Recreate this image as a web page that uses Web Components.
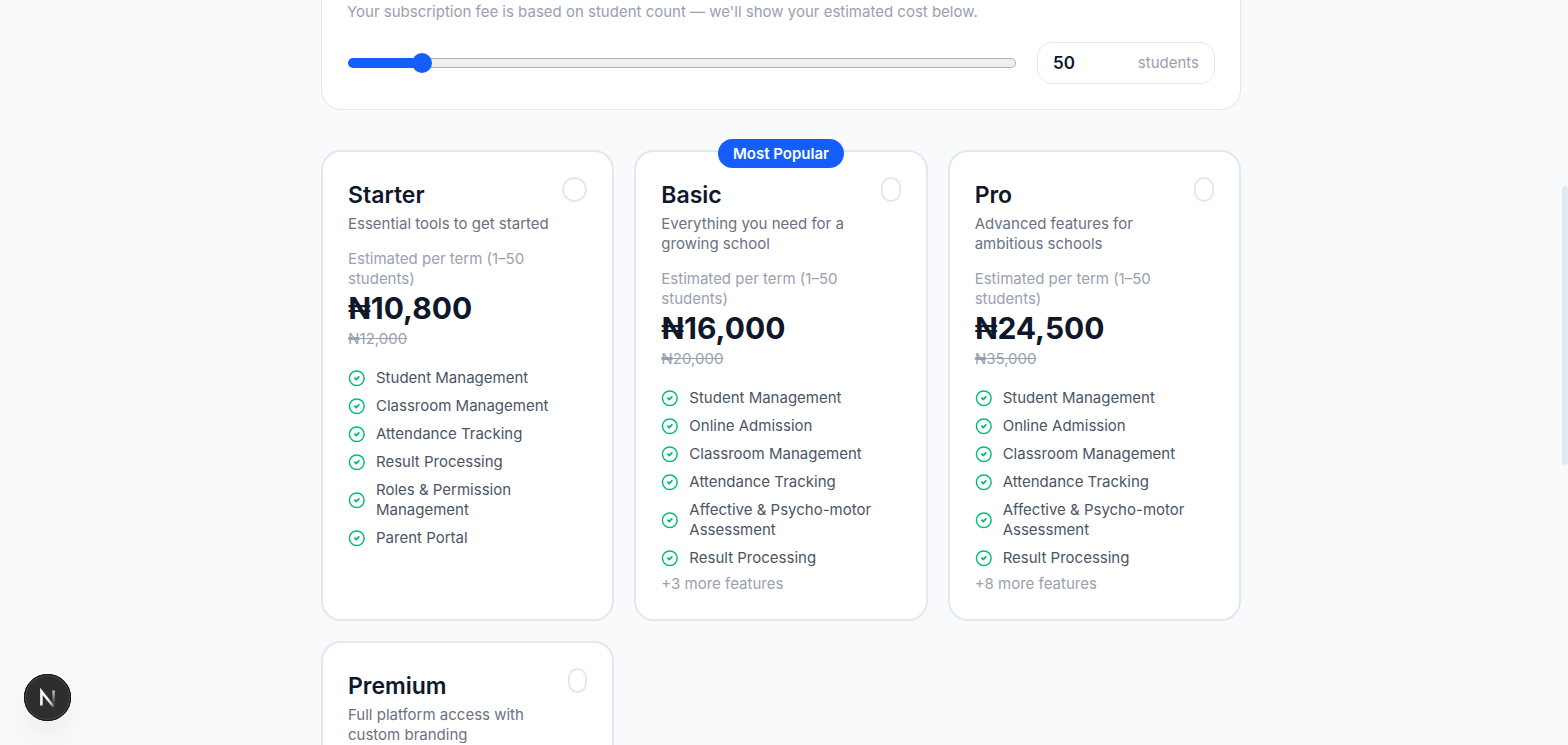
<!DOCTYPE html>
<html lang="en">
<head>
<meta charset="utf-8">
<meta name="viewport" content="width=device-width, initial-scale=1">
<title>Choose a plan</title>
<style>
  :root {
    --page: #f8fafc;
    --line: #e2e8f0;
    --brand: #155dfc;
    --ink: #0f172b;
    --body: #4a5565;
    --soft: #6a7282;
    --muted: #99a1af;
    --ok: #00bc7d;
  }
  body {
    margin: 0;
    background: var(--page);
    color: var(--ink);
    font: 15px/20px Inter, "Liberation Sans", sans-serif;
  }
</style>
</head>
<body>

<plan-page>
  <student-count value="50" min="1" max="500">
    Your subscription fee is based on student count — we'll show your estimated cost below.
  </student-count>

  <plan-grid>
    <plan-card name="Starter" price="₦10,800" was="₦12,000">
      Essential tools to get started
      <plan-feature slot="features">Student Management</plan-feature>
      <plan-feature slot="features">Classroom Management</plan-feature>
      <plan-feature slot="features">Attendance Tracking</plan-feature>
      <plan-feature slot="features">Result Processing</plan-feature>
      <plan-feature slot="features">Roles &amp; Permission Management</plan-feature>
      <plan-feature slot="features">Parent Portal</plan-feature>
    </plan-card>
    <plan-card name="Basic" price="₦16,000" was="₦20,000" more="3" badge="Most Popular">
      Everything you need for a growing school
      <plan-feature slot="features">Student Management</plan-feature>
      <plan-feature slot="features">Online Admission</plan-feature>
      <plan-feature slot="features">Classroom Management</plan-feature>
      <plan-feature slot="features">Attendance Tracking</plan-feature>
      <plan-feature slot="features">Affective &amp; Psycho-motor Assessment</plan-feature>
      <plan-feature slot="features">Result Processing</plan-feature>
    </plan-card>
    <plan-card name="Pro" price="₦24,500" was="₦35,000" more="8">
      Advanced features for ambitious schools
      <plan-feature slot="features">Student Management</plan-feature>
      <plan-feature slot="features">Online Admission</plan-feature>
      <plan-feature slot="features">Classroom Management</plan-feature>
      <plan-feature slot="features">Attendance Tracking</plan-feature>
      <plan-feature slot="features">Affective &amp; Psycho-motor Assessment</plan-feature>
      <plan-feature slot="features">Result Processing</plan-feature>
    </plan-card>
    <plan-card name="Premium">
      Full platform access with custom branding
    </plan-card>
  </plan-grid>
</plan-page>
<dev-badge></dev-badge>

<script>
/* ── <plan-page>: scrolling column with a slim rail on the right ── */
class PlanPage extends HTMLElement {
  constructor() {
    super();
    this.attachShadow({ mode: "open" }).innerHTML = `
      <style>
        :host {
          display: grid;
          grid-template-columns: 1fr 6px;
          height: 100vh;
        }
        main {
          overflow-y: auto;
          scrollbar-width: none;
        }
        .column {
          display: flex;
          flex-direction: column;
          gap: 40px;
          max-width: 920px;
          margin: 0 auto;
          padding-bottom: 40px;
        }
        .rail {
          display: grid;
          grid-template-rows: 186fr 279fr 280fr;
          background: #faf9f9;
        }
        .thumb {
          grid-row: 2;
          border-radius: 3px;
          background: var(--line);
        }
      </style>
      <main><div class="column"><slot></slot></div></main>
      <div class="rail"><div class="thumb"></div></div>
    `;
  }
}

/* ── <student-count>: range slider and number box kept in sync ── */
class StudentCount extends HTMLElement {
  connectedCallback() {
    const value = this.getAttribute("value");
    const min = this.getAttribute("min");
    const max = this.getAttribute("max");
    const root = this.attachShadow({ mode: "open" });
    root.innerHTML = `
      <style>
        :host {
          display: block;
          padding: 2px 25px 25px;
          border: 1px solid var(--line);
          border-top: 0;
          border-radius: 0 0 20px 20px;
          background: #fff;
        }
        p { margin: 0 0 20px; color: var(--muted); }
        .row { display: flex; align-items: center; gap: 20px; }
        input { font: inherit; color: inherit; }

        .range {
          --fill: 10%;
          appearance: none;
          flex: 1;
          min-width: 0;
          height: 20px;
          margin: 0 1px;
          background: none;
        }
        .range::-webkit-slider-runnable-track {
          box-sizing: border-box;
          height: 10px;
          border: 1px solid transparent;
          border-radius: 5px;
          background:
            linear-gradient(var(--brand), var(--brand)) 0 0 / var(--fill) 100% no-repeat border-box,
            linear-gradient(#efefef, #efefef) padding-box,
            linear-gradient(#b2b2b2, #b2b2b2) border-box;
        }
        .range::-webkit-slider-thumb {
          appearance: none;
          width: 20px;
          height: 20px;
          margin-top: -6px;
          border-radius: 50%;
          background: var(--brand);
        }

        .box {
          display: flex;
          align-items: center;
          justify-content: space-between;
          box-sizing: border-box;
          width: 178px;
          height: 42px;
          padding: 0 15px;
          border: 1px solid #e5e7eb;
          border-radius: 15px;
        }
        .number {
          appearance: textfield;
          width: 70px;
          padding: 0;
          border: 0;
          outline: 0;
          background: none;
          font-size: 17px;
          font-weight: 600;
        }
        .number::-webkit-inner-spin-button { appearance: none; margin: 0; }
        label { color: var(--muted); }
      </style>
      <p><slot></slot></p>
      <div class="row">
        <input class="range" type="range" aria-label="Student count" min="${min}" max="${max}" value="${value}">
        <div class="box">
          <input class="number" id="count" type="number" min="${min}" max="${max}" value="${value}">
          <label for="count">students</label>
        </div>
      </div>
    `;
    this._range = root.querySelector(".range");
    this._number = root.querySelector(".number");
    this._range.addEventListener("input", () => this._sync(this._range.value));
    this._number.addEventListener("input", () => this._sync(this._number.value));
    this._sync(value);
  }

  _sync(value) {
    const { min, max } = this._range;
    this._range.value = value;
    this._number.value = value;
    const k = (this._range.value - min) / (max - min);
    this._range.style.setProperty("--fill", `calc(10px + (100% - 20px) * ${k})`);
  }
}

/* ── <plan-grid>: equal rows of cards, one plan selected at a time ── */
class PlanGrid extends HTMLElement {
  constructor() {
    super();
    this.attachShadow({ mode: "open" }).innerHTML = `
      <style>
        :host {
          display: grid;
          grid-template-columns: repeat(3, 1fr);
          grid-auto-rows: 1fr;
          gap: 20px;
        }
        @media (max-width: 800px) {
          :host { grid-template-columns: 1fr; }
        }
      </style>
      <slot></slot>
    `;
    this.addEventListener("plan-select", (e) => {
      for (const card of this.querySelectorAll("plan-card")) {
        card.selected = card === e.target;
      }
    });
  }
}

/* ── <plan-card> ── */
class PlanCard extends HTMLElement {
  connectedCallback() {
    const name = this.getAttribute("name");
    const price = this.getAttribute("price");
    const was = this.getAttribute("was");
    const more = this.getAttribute("more");
    const badge = this.getAttribute("badge");
    const root = this.attachShadow({ mode: "open" });
    root.innerHTML = `
      <style>
        :host {
          position: relative;
          display: block;
          padding: 25px;
          border: 2px solid var(--line);
          border-radius: 20px;
          background: #fff;
        }
        :host([selected]) { border-color: var(--brand); }
        .badge {
          position: absolute;
          top: -13px;
          left: 50%;
          transform: translateX(-50%);
          padding: 5px 15px 4px;
          border-radius: 15px;
          background: var(--brand);
          color: #fff;
          font-weight: 600;
          white-space: nowrap;
        }
        header {
          display: flex;
          align-items: flex-start;
          justify-content: space-between;
          margin-bottom: 15px;
        }
        h3 { margin: 0; font-size: 23px; line-height: 37px; font-weight: 600; }
        p { margin: 0; }
        .about { color: var(--soft); }
        .muted { color: var(--muted); }
        .price { margin-bottom: 2px; font-size: 30px; line-height: 38px; font-weight: 700; }
        input {
          appearance: none;
          box-sizing: border-box;
          width: 25px;
          min-width: 0;
          height: 25px;
          margin: 0;
          border: 2px solid #e5e7eb;
          border-radius: 15px;
        }
        input:checked { border-color: var(--brand); background: var(--brand); }
        .features {
          display: flex;
          flex-direction: column;
          gap: 8px;
          margin: 19px 0 6px;
        }
      </style>
      ${badge ? `<span class="badge">${badge}</span>` : ""}
      <header>
        <div>
          <h3><label for="pick">${name}</label></h3>
          <p class="about"><slot></slot></p>
        </div>
        <input id="pick" type="radio" name="plan">
      </header>
      ${price ? `
        <p class="muted">Estimated per term (1–50 students)</p>
        <p class="price">${price}</p>
        <p class="muted"><s>${was}</s></p>
        <div class="features" role="list"><slot name="features"></slot></div>
      ` : ""}
      ${more ? `<p class="muted">+${more} more features</p>` : ""}
    `;
    this._input = root.querySelector("input");
    this._input.addEventListener("change", () => {
      this.dispatchEvent(new CustomEvent("plan-select", { bubbles: true }));
    });
  }

  set selected(on) {
    this._input.checked = on;
    this.toggleAttribute("selected", on);
  }
}

/* ── <plan-feature>: tick and one line of text ── */
class PlanFeature extends HTMLElement {
  connectedCallback() {
    this.setAttribute("role", "listitem");
    this.attachShadow({ mode: "open" }).innerHTML = `
      <style>
        :host {
          display: flex;
          align-items: center;
          gap: 10px;
          color: var(--body);
        }
        svg { flex: none; width: 18px; height: 18px; color: var(--ok); }
      </style>
      <svg viewBox="0 0 24 24" fill="none" stroke="currentColor" stroke-width="2"
        stroke-linecap="round" stroke-linejoin="round" aria-hidden="true">
        <circle cx="11.7" cy="12.3" r="9.8"/>
        <path d="m9.2 12.3 1.7 1.7 3.6-3.5" stroke-width="2.4"/>
      </svg>
      <span><slot></slot></span>
    `;
  }
}

/* ── <dev-badge>: round floating button in the corner ── */
class DevBadge extends HTMLElement {
  constructor() {
    super();
    this.attachShadow({ mode: "open" }).innerHTML = `
      <style>
        :host { position: fixed; left: 24px; bottom: 24px; }
        button {
          display: block;
          width: 47px;
          height: 47px;
          padding: 0;
          border: 0;
          border-radius: 50%;
          background: #2e2e2e;
          box-shadow:
            inset 0 0 0 1px #111,
            inset 0 0 0 2px #4a4a4a,
            0 16px 32px -8px rgba(0, 0, 0, 0.12);
        }
        svg { display: block; width: 47px; height: 47px; }
      </style>
      <button type="button" aria-label="Open developer tools">
        <svg viewBox="0 0 47 47" fill="none" stroke-width="2.5" aria-hidden="true">
          <defs>
            <linearGradient id="slash" gradientUnits="userSpaceOnUse" x1="24" y1="24" x2="31" y2="33">
              <stop stop-color="#fff"/>
              <stop offset="0.6" stop-color="#fff" stop-opacity="0.7"/>
              <stop offset="1" stop-color="#fff" stop-opacity="0"/>
            </linearGradient>
            <linearGradient id="stem" gradientUnits="userSpaceOnUse" x1="0" y1="16" x2="0" y2="31">
              <stop stop-color="#fff" stop-opacity="0.75"/>
              <stop offset="1" stop-color="#fff" stop-opacity="0"/>
            </linearGradient>
          </defs>
          <path d="M31 34.5 17.4 17.4V31.5" stroke="url(#slash)"/>
          <path d="M29.6 16.5V31" stroke="url(#stem)"/>
        </svg>
      </button>
    `;
  }
}

customElements.define("plan-page", PlanPage);
customElements.define("student-count", StudentCount);
customElements.define("plan-grid", PlanGrid);
customElements.define("plan-card", PlanCard);
customElements.define("plan-feature", PlanFeature);
customElements.define("dev-badge", DevBadge);
</script>
</body>
</html>
